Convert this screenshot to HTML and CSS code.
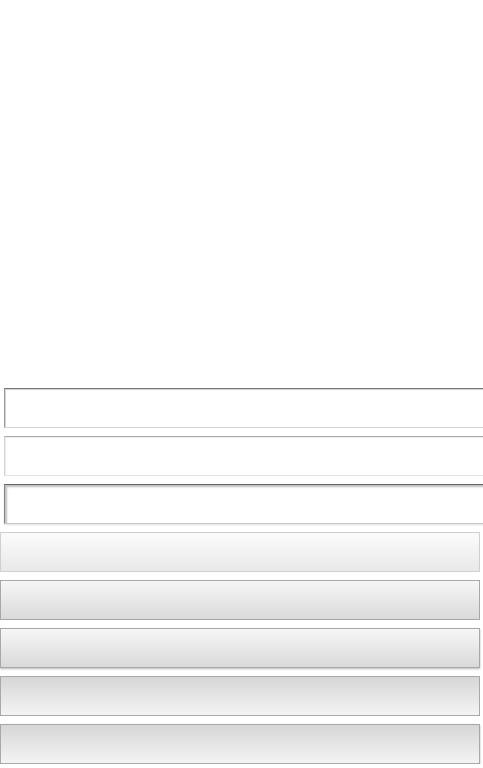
FILE: index.html
```html
<!DOCTYPE html>
<html>
<head>
<meta charset="utf-8">
<link rel="stylesheet" href="styles.css">
</head>
<body>
<div class="stage"></div>
<div class="form">
  <div class="field field-normal"></div>
  <div class="field field-disabled"></div>
  <div class="field field-focus"></div>
  <div class="btn btn-light"></div>
  <div class="btn btn-normal"></div>
  <div class="btn btn-normal btn-raised"></div>
  <div class="btn btn-pressed"></div>
  <div class="btn btn-pressed btn-raised"></div>
</div>
</body>
</html>
```
FILE: styles.css
```css
html, body {
  margin: 0;
  padding: 0;
  background: #fff;
  overflow: hidden;
  font-family: "Liberation Sans", Arial, sans-serif;
}
.stage {
  height: 388px;
}
.form {
  display: flex;
  flex-direction: column;
  gap: 8px;
}
.field {
  box-sizing: border-box;
  margin-left: 4px;
  width: 500px;
  height: 40px;
  background: #fff;
  border: 1px solid;
}
.field-normal {
  border-color: #777 #ddd #d6d6d6 #999;
  box-shadow: inset 1px 1px 1px rgba(0, 0, 0, 0.18);
}
.field-disabled {
  border-color: #aaa #e4e4e4 #e2e2e2 #d4d4d4;
  box-shadow: inset 1px 1px 1px rgba(0, 0, 0, 0.08);
}
.field-focus {
  border-color: #666 #ccc #c8c8c8 #888;
  box-shadow: inset 2px 2px 2px rgba(0, 0, 0, 0.25), 0 1px 2px rgba(0, 0, 0, 0.12);
}
.btn {
  box-sizing: border-box;
  width: 480px;
  height: 40px;
  border: 1px solid #a8a8a8;
}
.btn-light {
  border-color: #cfcfcf;
  background: linear-gradient(#fbfbfb, #e8e8e8);
}
.btn-normal {
  background: linear-gradient(#f6f6f6, #dadada);
}
.btn-pressed {
  background: linear-gradient(#d6d6d6, #f4f4f4);
}
.btn-raised {
  box-shadow: 0 1px 2px rgba(0, 0, 0, 0.28);
}
```
